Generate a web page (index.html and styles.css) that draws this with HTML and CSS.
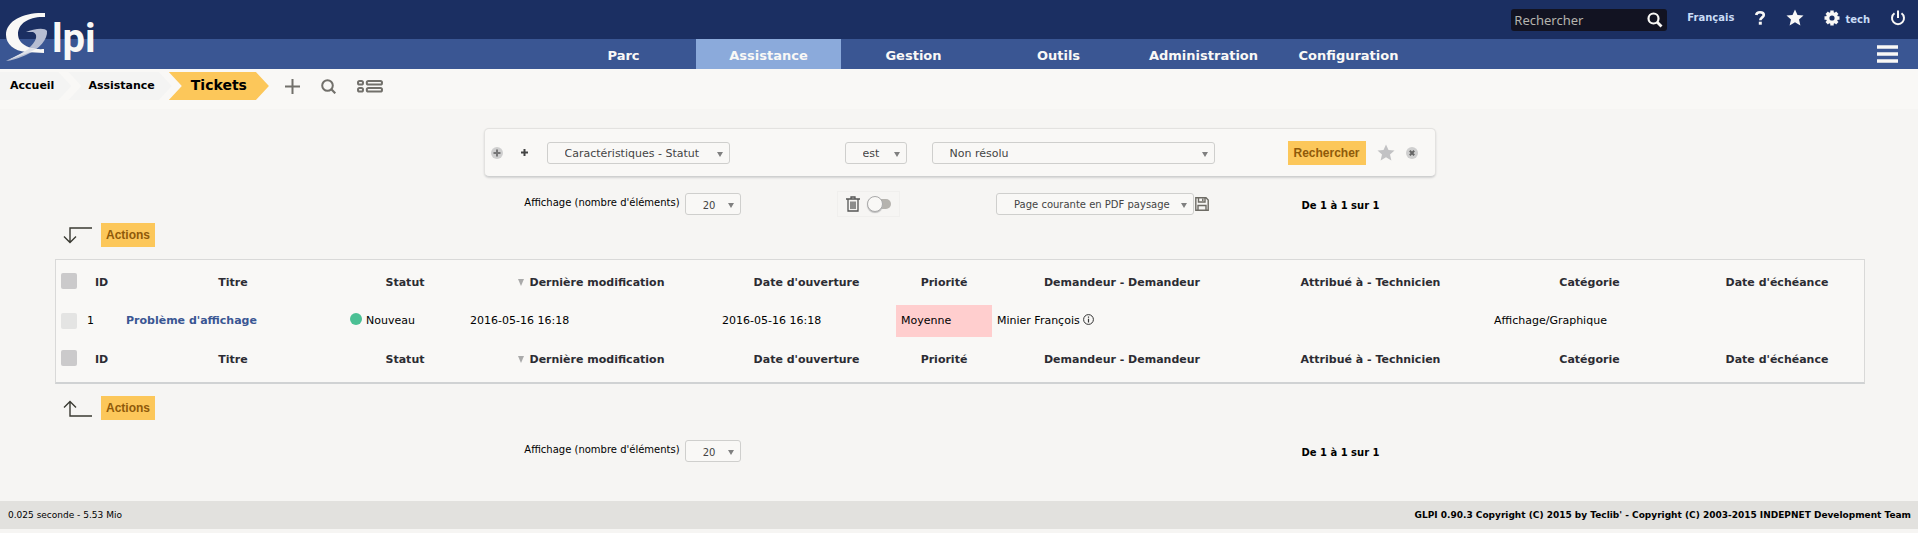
FILE: index.html
```html
<!DOCTYPE html>
<html lang="fr">
<head>
<meta charset="utf-8">
<title>GLPI - Tickets</title>
<link rel="stylesheet" href="styles.css">
</head>
<body>
<header class="header">
  <a class="logo" href="#" aria-label="GLPI">
    <svg class="logo-mark" width="50" height="52" viewBox="0 0 50 52" aria-hidden="true">
      <path d="M26 21C33 18 45 16 47 20C48 28 39 38 28 43C20 47 10 50 6 50C16 46 26 40 31 35C37 29 38 23 33 21Z" fill="#b6bdd2"/>
      <path d="M45 2C25 1 6 9 6 24C6 33 14 40 26 41L44 42L44 38C31 39 18 34 18 23C18 12 30 5 45 6Z" fill="#f9f8f6"/>
      <path d="M30 37L36 38L28 42L6 50L24 41Z" fill="#dfe2ea"/>
    </svg>
    <span class="logo-text">lpi</span>
  </a>
  <div class="tools">
    <form class="quick-search">
      <input class="quick-input" type="text" placeholder="Rechercher" aria-label="Rechercher">
      <button class="icon-button" type="button" aria-label="Lancer la recherche">
        <svg width="16" height="16" viewBox="0 0 16 16"><circle cx="6.5" cy="6.5" r="5" fill="none" stroke="currentColor" stroke-width="2.2"/><path d="M10 10L14.5 14.5" stroke="currentColor" stroke-width="2.8"/></svg>
      </button>
    </form>
    <a class="tool-link" href="#">Français</a>
    <a class="tool-link" href="#" aria-label="Aide">
      <svg width="12" height="14" viewBox="0 0 12 14"><path d="M2.2 4C2.5 1.900 4 1.300 6 1.300C8.300 1.300 9.800 2.400 9.800 4.100C9.800 6.300 6.300 6.500 6.300 9.300" fill="none" stroke="#f9f8f6" stroke-width="2.600"/><rect x="4.800" y="10.700" width="3" height="3" fill="#f9f8f6"/></svg>
    </a>
    <a class="tool-link" href="#" aria-label="Favoris">
      <svg width="18" height="17" viewBox="0 0 18 17"><path d="M9 .5L11.500 6L17.500 6.500L13 10.500L14.400 16.500L9 13.300L3.600 16.500L5 10.500L.5 6.500L6.500 6Z" fill="#f9f8f6"/></svg>
    </a>
    <a class="tool-link" href="#">
      <svg width="16" height="16" viewBox="0 0 16 16"><circle cx="8" cy="8" r="4.300" fill="none" stroke="#f9f8f6" stroke-width="3.400"/><path d="M8 .5V3M8 13V15.500M.5 8H3M13 8H15.500M2.700 2.700L4.500 4.500M11.500 11.500L13.300 13.300M2.700 13.300L4.500 11.500M11.500 4.500L13.300 2.700" stroke="#f9f8f6" stroke-width="3.400"/></svg>
      <span class="user-name">tech</span>
    </a>
    <a class="tool-link" href="#" aria-label="Déconnexion">
      <svg width="16" height="16" viewBox="0 0 16 16"><path d="M4.500 3.300A6 6 0 1 0 11.500 3.300M8 .5V8" fill="none" stroke="#f9f8f6" stroke-width="2"/></svg>
    </a>
  </div>
  <nav class="nav">
    <a class="nav-item" href="#">Parc</a>
    <a class="nav-item nav-item-active" href="#">Assistance</a>
    <a class="nav-item" href="#">Gestion</a>
    <a class="nav-item" href="#">Outils</a>
    <a class="nav-item" href="#">Administration</a>
    <a class="nav-item" href="#">Configuration</a>
  </nav>
  <button class="menu-button" type="button" aria-label="Menu">
    <svg width="21" height="18" viewBox="0 0 21 18"><path d="M0 2H21M0 9H21M0 16H21" stroke="#f9f8f6" stroke-width="3.400"/></svg>
  </button>
</header>

<div class="breadcrumb">
  <a class="crumb crumb-first" href="#">Accueil</a>
  <a class="crumb" href="#">Assistance</a>
  <a class="crumb crumb-current" href="#">Tickets</a>
  <div class="crumb-tools">
    <button class="icon-button" type="button" aria-label="Ajouter"><svg width="15" height="15" viewBox="0 0 15 15"><path d="M7.500 0V15M0 7.500H15" stroke="currentColor" stroke-width="2"/></svg></button>
    <button class="icon-button" type="button" aria-label="Rechercher"><svg width="15" height="15" viewBox="0 0 15 15"><circle cx="6.500" cy="6.500" r="5.300" fill="none" stroke="currentColor" stroke-width="2"/><path d="M10.300 10.300L14.300 14.300" stroke="currentColor" stroke-width="2.200"/></svg></button>
    <button class="icon-button" type="button" aria-label="Liste"><svg width="26" height="13" viewBox="0 0 26 13"><g fill="none" stroke="currentColor" stroke-width="2"><rect x="1" y="1" width="5" height="3.600" rx="1.600"/><rect x="9.800" y="1" width="15.200" height="3.600" rx="1.600"/><rect x="1" y="8" width="5" height="3.600" rx="1.600"/><rect x="9.800" y="8" width="15.200" height="3.600" rx="1.600"/></g></svg></button>
  </div>
</div>

<main class="page">
  <form class="criteria">
    <button class="icon-button" type="button" aria-label="Ajouter un critère"><svg width="12" height="12" viewBox="0 0 12 12"><circle cx="6" cy="6" r="6" fill="#cfcfcf"/><path d="M6 2.500V9.500M2.500 6H9.500" stroke="#777" stroke-width="2"/></svg></button>
    <button class="icon-button add-group" type="button" aria-label="Ajouter un critère global"><svg width="7" height="7" viewBox="0 0 7 7"><path d="M3.500 0V7M0 3.500H7" stroke="#444" stroke-width="2"/></svg></button>
    <span class="picker picker-field"><select aria-label="Champ"><option>Caractéristiques - Statut</option></select></span>
    <span class="picker picker-operator"><select aria-label="Opérateur"><option>est</option></select></span>
    <span class="picker picker-value"><select aria-label="Valeur"><option>Non résolu</option></select></span>
    <div class="criteria-actions">
      <button class="button" type="button">Rechercher</button>
      <button class="icon-button" type="button" aria-label="Sauvegarder"><svg width="18" height="17" viewBox="0 0 18 17"><path d="M9 .5L11.500 6L17.500 6.500L13 10.500L14.400 16.500L9 13.300L3.600 16.500L5 10.500L.5 6.500L6.500 6Z" fill="#c2c2c4"/></svg></button>
      <button class="icon-button" type="button" aria-label="Effacer"><svg width="12" height="12" viewBox="0 0 12 12"><circle cx="6" cy="6" r="6" fill="#cfcfcf"/><path d="M3.800 3.800L8.200 8.200M8.200 3.800L3.800 8.200" stroke="#666" stroke-width="2"/></svg></button>
    </div>
  </form>

  <div class="pager">
    <label class="page-size">Affichage (nombre d'éléments) <span class="picker picker-small"><select><option>20</option></select></span></label>
    <label class="trash-toggle">
      <svg width="14" height="16" viewBox="0 0 14 16" aria-hidden="true"><path d="M0 3H14M5 2.500V1H9V2.500M2 3.500V15H12V3.500M5 5.500V13M7 5.500V13M9 5.500V13" fill="none" stroke="#555" stroke-width="1.300"/></svg>
      <input class="switch" type="checkbox" aria-label="Corbeille">
    </label>
    <div class="export">
      <span class="picker picker-export"><select aria-label="Export"><option>Page courante en PDF paysage</option></select></span>
      <button class="icon-button" type="button" aria-label="Exporter"><svg width="14" height="14" viewBox="0 0 14 14"><path d="M.8.8H11L13.200 3V13.200H.8ZM3.500 1V5H10V1M7.800 1.800V4M3 13V8.500H11V13" fill="none" stroke="#6d6b64" stroke-width="1.400"/></svg></button>
    </div>
    <strong class="range">De 1 à 1 sur 1</strong>
  </div>

  <div class="mass-actions">
    <svg width="29" height="17" viewBox="0 0 29 17" aria-hidden="true"><path d="M29 1H7V15.500M1 9.500L7 15.500L13 9.500" fill="none" stroke="#3a3a32" stroke-width="1.400"/></svg>
    <button class="button" type="button">Actions</button>
  </div>

  <table class="tickets">
    <colgroup>
      <col class="col-check"><col class="col-id"><col class="col-title"><col class="col-status"><col class="col-modified"><col class="col-opened"><col class="col-priority"><col class="col-requester"><col class="col-assigned"><col class="col-category"><col class="col-due">
    </colgroup>
    <thead>
      <tr><th><input class="check" type="checkbox" aria-label="Tout cocher"></th><th>ID</th><th>Titre</th><th>Statut</th><th><span class="sort"></span>Dernière modification</th><th>Date d'ouverture</th><th>Priorité</th><th>Demandeur - Demandeur</th><th>Attribué à - Technicien</th><th>Catégorie</th><th>Date d'échéance</th></tr>
    </thead>
    <tbody>
      <tr><td class="cell-check"><input class="check check-row" type="checkbox" aria-label="Ticket 1"></td><td>1</td><td><a class="ticket-link" href="#">Problème d'affichage</a></td><td><span class="status-dot"></span>Nouveau</td><td>2016-05-16 16:18</td><td>2016-05-16 16:18</td><td class="priority">Moyenne</td><td>Minier François <svg class="info" width="11" height="11" viewBox="0 0 11 11"><circle cx="5.500" cy="5.500" r="4.900" fill="none" stroke="#333"/><path d="M5.500 4.800V8.500M5.500 2.500V3.700" stroke="#333" stroke-width="1.200"/></svg></td><td></td><td>Affichage/Graphique</td><td></td></tr>
    </tbody>
    <tfoot>
      <tr><th><input class="check" type="checkbox" aria-label="Tout cocher"></th><th>ID</th><th>Titre</th><th>Statut</th><th><span class="sort"></span>Dernière modification</th><th>Date d'ouverture</th><th>Priorité</th><th>Demandeur - Demandeur</th><th>Attribué à - Technicien</th><th>Catégorie</th><th>Date d'échéance</th></tr>
    </tfoot>
  </table>

  <div class="mass-actions">
    <svg width="29" height="17" viewBox="0 0 29 17" aria-hidden="true"><path d="M29 16H7V1.500M1 7.500L7 1.500L13 7.500" fill="none" stroke="#3a3a32" stroke-width="1.400"/></svg>
    <button class="button" type="button">Actions</button>
  </div>

  <div class="pager pager-bottom">
    <label class="page-size">Affichage (nombre d'éléments) <span class="picker picker-small"><select><option>20</option></select></span></label>
    <strong class="range">De 1 à 1 sur 1</strong>
  </div>
</main>

<footer class="footer">
  <span>0.025 seconde - 5.53 Mio</span>
  <a class="copyright" href="#">GLPI 0.90.3 Copyright (C) 2015 by Teclib' - Copyright (C) 2003-2015 INDEPNET Development Team</a>
</footer>
</body>
</html>
```
FILE: styles.css
```css
* {
  box-sizing: border-box;
}

body {
  margin: 0;
  background: #f6f5f3;
  color: #000;
  font: 11px/16px Verdana, "DejaVu Sans", sans-serif;
}

a {
  color: inherit;
  text-decoration: none;
}

svg {
  display: block;
  flex: none;
}

button,
input,
select {
  margin: 0;
  font: inherit;
}

.icon-button,
.menu-button {
  display: flex;
  align-items: center;
  padding: 0;
  border: 0;
  background: none;
  color: inherit;
}

/* Header */
.header {
  display: grid;
  grid-template: 39px 30px / 110px 1fr 56px;
  background: linear-gradient(#1b2f62 39px, #3a5693 39px);
  color: #f9f8f6;
}

.logo {
  grid-row: 1 / 3;
  display: flex;
  align-items: center;
}

.logo-mark {
  margin-top: 4px;
}

.logo-text {
  margin: 8px 0 0 2px;
  font: bold 40px/40px Roboto, sans-serif;
}

.tools {
  grid-column: 2 / 4;
  display: flex;
  align-items: center;
  justify-content: flex-end;
  gap: 20px;
  padding: 0 12px 4px 0;
}

.quick-search {
  display: flex;
  width: 156px;
  height: 22px;
  margin-top: 4px;
  padding: 0 4px 0 3px;
  border-radius: 3px;
  background: #121322;
}

.quick-input {
  flex: 1;
  min-width: 0;
  padding: 0;
  border: 0;
  background: none;
  color: #fff;
  font: 13px/22px "Noto Sans", sans-serif;
}

.quick-input::placeholder {
  color: #b5b4ae;
}

.tool-link {
  display: flex;
  align-items: center;
  gap: 5px;
  color: #c9dcf6;
  font-size: 10px;
  font-weight: bold;
}

.user-name {
  padding-top: 4px;
}

.nav {
  grid-column: 2;
  display: flex;
  justify-content: center;
}

.nav-item {
  flex: 0 1 145px;
  height: 30px;
  font-size: 13px;
  font-weight: bold;
  line-height: 34px;
  text-align: center;
}

.nav-item-active {
  background: #8baadb;
}

.menu-button {
  justify-content: flex-end;
  padding-right: 20px;
}

/* Breadcrumb */
.breadcrumb {
  display: flex;
  height: 40px;
  padding-top: 3px;
  background: #f9f8f6;
}

.crumb {
  height: 28px;
  margin-right: -3px;
  padding: 0 17px 0 20px;
  background: #f4f4f3;
  clip-path: polygon(0 0, calc(100% - 13px) 0, 100% 50%, calc(100% - 13px) 100%, 0 100%, 13px 50%);
  font-weight: bold;
  line-height: 27px;
}

.crumb-first {
  padding-left: 10px;
  clip-path: polygon(0 0, calc(100% - 13px) 0, 100% 50%, calc(100% - 13px) 100%, 0 100%);
}

.crumb-current {
  margin-right: 0;
  padding: 0 22px;
  background: #fcc75a;
  font-size: 14px;
}

.crumb-tools {
  display: flex;
  height: 28px;
  gap: 21px;
  padding-left: 16px;
  color: #72706b;
}

/* Criteria */
.page {
  padding: 19px 54px 33px 55px;
}

.criteria {
  display: flex;
  align-items: center;
  max-width: 952px;
  height: 49px;
  margin: 0 auto;
  padding: 0 17px 0 6px;
  border: 1px solid #e3e2e0;
  border-bottom-color: #cfd0d0;
  border-radius: 5px;
  background: #f9f8f6;
  box-shadow: 0 1px 2px #d2d2d2;
}

.add-group {
  margin: 0 19px 0 18px;
}

.picker {
  position: relative;
  display: inline-block;
}

.picker select {
  display: block;
  width: 100%;
  height: 22px;
  padding: 2px 18px 0 17px;
  border: 1px solid #cfcfcd;
  border-radius: 3px;
  background: #f9f8f6;
  color: #444;
  appearance: none;
}

.picker::after {
  content: "";
  position: absolute;
  top: 10px;
  right: 7px;
  border: 3px solid transparent;
  border-top: 5px solid #808080;
  border-bottom: 0;
  pointer-events: none;
}

.picker-field {
  width: 183px;
}

.picker-operator {
  width: 62px;
  margin: 0 25px 0 115px;
}

.picker-value {
  width: 283px;
}

.criteria-actions {
  display: flex;
  align-items: center;
  gap: 11px;
  margin-left: auto;
}

.button {
  height: 24px;
  padding: 0 5px;
  border: 0;
  background: #fcc75a;
  color: #8f5a0a;
  font: bold 12px/22px Arial, "Liberation Sans", sans-serif;
}

.criteria-actions .button {
  width: 78px;
}

/* Pager */
.pager {
  display: grid;
  grid-template-columns: repeat(4, 236px);
  justify-content: center;
  justify-items: center;
  align-items: center;
  padding: 14px 0 6px 54px;
  font-size: 10px;
}

.pager-bottom {
  padding-top: 20px;
}

.page-size {
  grid-column: 1;
  display: flex;
  gap: 5px;
  line-height: 20px;
}

.picker-small {
  width: 56px;
}

.trash-toggle {
  display: flex;
  align-items: center;
  gap: 7px;
  height: 26px;
  padding: 0 8px;
  border: 1px solid #f0efed;
}

.switch {
  position: relative;
  width: 24px;
  height: 16px;
  appearance: none;
}

.switch::before,
.switch::after {
  content: "";
  position: absolute;
  border-radius: 8px;
}

.switch::before {
  inset: 3px 0 3px 4px;
  background: #b5b3ae;
}

.switch::after {
  inset: 0 8px 0 0;
  border: 1px solid #aaa;
  background: #f9f8f6;
  box-shadow: 0 1px 1px #bbb;
}

.export {
  display: flex;
  gap: 1px;
  padding-right: 4px;
}

.picker-export {
  width: 198px;
}

.range {
  grid-column: 4;
  padding-top: 4px;
  line-height: 18px;
}

/* Table */
.mass-actions {
  display: flex;
  align-items: center;
  gap: 9px;
  padding: 0 8px;
}

.tickets {
  width: 100%;
  margin: 12px 0;
  table-layout: fixed;
  border-collapse: separate;
  border-spacing: 0;
  border: 1px solid #d9d9d8;
  border-bottom: 2px solid #d0d2d3;
  background: #f9f8f6;
}

.tickets th {
  height: 45px;
  padding: 0;
  color: #2c2c33;
  white-space: nowrap;
}

.tickets td {
  height: 32px;
  padding: 0 5px;
}

.col-check { width: 26px; }
.col-id { width: 39px; }
.col-title { width: 224px; }
.col-status { width: 120px; }
.col-modified { width: 252px; }
.col-opened { width: 179px; }
.col-priority { width: 96px; }
.col-requester { width: 260px; }
.col-assigned { width: 237px; }
.col-category { width: 201px; }
.col-due { width: 174px; }

.check {
  display: block;
  width: 16px;
  height: 16px;
  margin: 0 5px 4px;
  border-radius: 2px;
  background: #cbcacb;
  appearance: none;
}

.tickets .cell-check {
  padding: 0;
}

.check-row {
  margin-bottom: 0;
  background: #e4e4e3;
}

.ticket-link {
  color: #3a5693;
  font-weight: bold;
}

.status-dot {
  display: inline-block;
  width: 12px;
  height: 12px;
  margin-right: 4px;
  border-radius: 50%;
  background: #4bc094;
  vertical-align: -1px;
}

.sort {
  display: inline-block;
  margin-right: 6px;
  border: 3px solid transparent;
  border-top: 7px solid #aaa;
  border-bottom: 0;
}

.priority {
  background: #ffcece;
}

.info {
  display: inline-block;
  vertical-align: -1px;
}

/* Footer */
.footer {
  display: flex;
  justify-content: space-between;
  padding: 0 7px 0 8px;
  background: #e2e1de;
  font-size: 9px;
  line-height: 28px;
}

.copyright {
  font-weight: bold;
}
```
